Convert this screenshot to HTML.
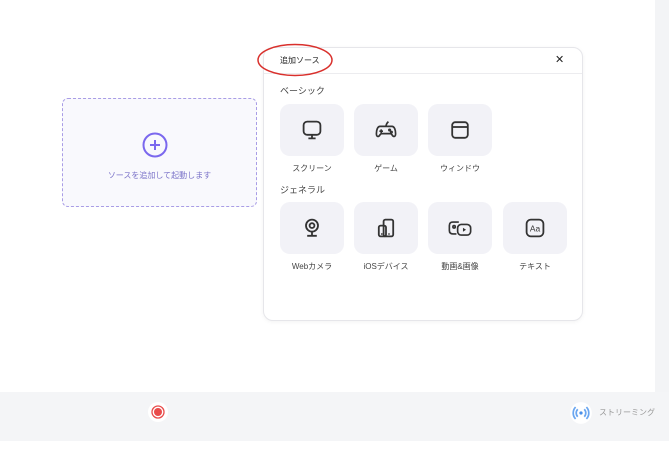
<!DOCTYPE html>
<html><head><meta charset="utf-8"><style>
*{margin:0;padding:0;box-sizing:border-box}
body{width:669px;height:450px;background:#fff;position:relative;overflow:hidden;font-family:"Liberation Sans","Noto Sans CJK JP",sans-serif;color:#333}
.abs{position:absolute}
.scroll{left:655px;top:0;width:14px;height:392px;background:#f3f4f6}
.bar{left:0;top:392px;width:669px;height:49px;background:#f4f5f7}
.card{left:62px;top:98px;width:195px;height:109px;border:1px dashed #a99de6;border-radius:6px;background:#f9f9fd}
.panel{left:263px;top:47px;width:320px;height:274px;border:1px solid #e6e6ea;border-radius:10px;background:#fff;box-shadow:0 1px 4px rgba(0,0,0,.05)}
.tile{width:64px;height:52px;background:#f2f2f7;border-radius:10px;display:flex;align-items:center;justify-content:center}
.lbl{font-size:8px;color:#444;width:64px;text-align:center}
.sec{font-size:9px;color:#444}
svg{display:block}
</style></head><body>
<div class="abs scroll"></div>
<div class="abs bar"></div>
<div class="abs card"></div>
<svg class="abs" style="left:142px;top:132px" width="26" height="26" viewBox="0 0 26 26"><circle cx="13" cy="13" r="11.5" fill="none" stroke="#7b68ee" stroke-width="2"/><path d="M13 8v10M8 13h10" stroke="#7b68ee" stroke-width="2"/></svg>
<div class="abs" style="left:62px;top:170px;width:195px;text-align:center;font-size:8px;color:#7c74c9">ソースを追加して起動します</div>

<div class="abs panel"></div>
<div class="abs" style="left:280px;top:55px;font-size:8px;color:#222">追加ソース</div>
<div class="abs" style="left:555px;top:53px;font-size:11px;color:#222">✕</div>
<div class="abs" style="left:264px;top:73px;width:318px;height:1px;background:#ececef"></div>
<svg class="abs" style="left:256px;top:42px" width="80" height="36"><ellipse cx="39" cy="18" rx="37" ry="15.5" fill="none" stroke="#d9302c" stroke-width="1.5"/></svg>

<div class="abs sec" style="left:280px;top:84px">ベーシック</div>
<div class="abs tile" style="left:280px;top:104px"><svg width="24" height="24" viewBox="0 0 20 20" fill="none" stroke="#333" stroke-width="1.5"><rect x="3" y="3" width="14" height="11" rx="3"/><path d="M10 14v3M7 17h6"/></svg></div>
<div class="abs tile" style="left:354px;top:104px"><svg width="24" height="24" viewBox="0 0 20 20" fill="none" stroke="#333" stroke-width="1.4"><path d="M5 7h10c2 0 3 3 3 6s-2 3-3 1l-1-1H6l-1 1c-1 2-3 2-3-1s1-6 3-6z"/><path d="M10 7c0-2 1-3 2-4M6 9.5v3M4.5 11h3"/><circle cx="13" cy="10" r=".6"/><circle cx="14.5" cy="11.8" r=".6"/></svg></div>
<div class="abs tile" style="left:428px;top:104px"><svg width="24" height="24" viewBox="0 0 20 20" fill="none" stroke="#333" stroke-width="1.5"><rect x="3.5" y="3.5" width="13" height="13" rx="2.5"/><path d="M3.5 7.5h13"/></svg></div>
<div class="abs lbl" style="left:280px;top:163px">スクリーン</div>
<div class="abs lbl" style="left:354px;top:163px">ゲーム</div>
<div class="abs lbl" style="left:428px;top:163px">ウィンドウ</div>

<div class="abs sec" style="left:280px;top:183px">ジェネラル</div>
<div class="abs tile" style="left:280px;top:202px"><svg width="24" height="24" viewBox="0 0 20 20" fill="none" stroke="#333" stroke-width="1.5"><circle cx="10" cy="8" r="5"/><circle cx="10" cy="8" r="2"/><path d="M10 13v3M6 16.5h8"/></svg></div>
<div class="abs tile" style="left:354px;top:202px"><svg width="24" height="24" viewBox="0 0 20 20" fill="none" stroke="#333" stroke-width="1.5"><rect x="8" y="3" width="8" height="14" rx="1.5"/><rect x="4" y="8" width="6" height="9" rx="1.5"/><path d="M6 15h1M12 15h1"/></svg></div>
<div class="abs tile" style="left:428px;top:202px"><svg width="26" height="24" viewBox="0 0 22 20" fill="none" stroke="#333" stroke-width="1.4"><path d="M10 5H5c-2 0-3 1-3 3v4c0 2 1 3 3 3h3"/><rect x="9" y="7" width="11" height="9" rx="3"/><path d="M13.5 9.8v3.4l2.6-1.7z" fill="#333" stroke="none"/><circle cx="6" cy="9" r="1"/></svg></div>
<div class="abs tile" style="left:503px;top:202px"><svg width="24" height="24" viewBox="0 0 20 20" fill="none" stroke="#333" stroke-width="1.5"><rect x="3" y="3" width="14" height="14" rx="3.5"/><text x="10" y="13" font-size="7" text-anchor="middle" fill="#333" stroke="none" font-family="Liberation Sans">Aa</text></svg></div>
<div class="abs lbl" style="left:280px;top:261px">Webカメラ</div>
<div class="abs lbl" style="left:354px;top:261px">iOSデバイス</div>
<div class="abs lbl" style="left:428px;top:261px">動画&amp;画像</div>
<div class="abs lbl" style="left:503px;top:261px">テキスト</div>

<svg class="abs" style="left:146px;top:400px" width="24" height="24" viewBox="0 0 24 24"><circle cx="12" cy="12" r="10" fill="#fff"/><circle cx="12" cy="12" r="6" fill="none" stroke="#e94b4b" stroke-width="1.3"/><circle cx="12" cy="12" r="4" fill="#e94b4b"/></svg>
<svg class="abs" style="left:568px;top:400px" width="26" height="26" viewBox="0 0 24 24"><circle cx="12" cy="12" r="10" fill="#fff"/><circle cx="12" cy="12" r="1.5" fill="#4a8fe8"/><path d="M9 8.5a5 5 0 0 0 0 7M15 8.5a5 5 0 0 1 0 7M7 6.5a8 8 0 0 0 0 11M17 6.5a8 8 0 0 1 0 11" fill="none" stroke="#6aa6f0" stroke-width="1.6"/></svg>
<div class="abs" style="left:599px;top:407px;font-size:8px;color:#999">ストリーミング</div>
</body></html>
